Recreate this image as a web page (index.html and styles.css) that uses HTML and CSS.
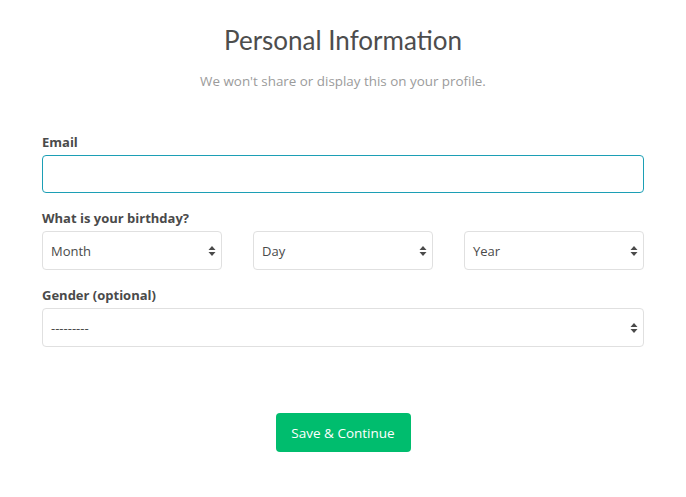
FILE: index.html
```html
<!DOCTYPE html>
<html>
<head>
<meta charset="utf-8">
<link rel="stylesheet" href="styles.css">
</head>
<body>
<div class="page">
  <header class="head">
    <h1 class="title">Personal Information</h1>
    <p class="subtitle">We won't share or display this on your profile.</p>
  </header>
  <form class="form">
    <div class="field">
      <label class="label">Email</label>
      <div class="input focused"></div>
    </div>
    <div class="field">
      <label class="label">What is your birthday?</label>
      <div class="row">
        <div class="select"><span>Month</span><svg class="arrows" width="8" height="12" viewBox="0 0 8 12"><path d="M4 1 L7.5 5 H0.5 Z M4 11 L0.5 7 H7.5 Z" fill="#4a4a4a"/></svg></div>
        <div class="select"><span>Day</span><svg class="arrows" width="8" height="12" viewBox="0 0 8 12"><path d="M4 1 L7.5 5 H0.5 Z M4 11 L0.5 7 H7.5 Z" fill="#4a4a4a"/></svg></div>
        <div class="select"><span>Year</span><svg class="arrows" width="8" height="12" viewBox="0 0 8 12"><path d="M4 1 L7.5 5 H0.5 Z M4 11 L0.5 7 H7.5 Z" fill="#4a4a4a"/></svg></div>
      </div>
    </div>
    <div class="field">
      <label class="label">Gender (optional)</label>
      <div class="select"><span>---------</span><svg class="arrows" width="8" height="12" viewBox="0 0 8 12"><path d="M4 1 L7.5 5 H0.5 Z M4 11 L0.5 7 H7.5 Z" fill="#4a4a4a"/></svg></div>
    </div>
    <div class="actions">
      <button type="button" class="btn">Save &amp; Continue</button>
    </div>
  </form>
</div>
</body>
</html>
```
FILE: styles.css
```css
* { box-sizing: border-box; }
html, body { margin: 0; padding: 0; background: #fff; }
body { font-family: "Open Sans", Lato, sans-serif; color: #4a4a4a; }
.page { padding: 0 42px 0 42px; width: 686px; }
.head { text-align: center; padding-top: 24px; }
.title { margin: 0; font-family: Lato, "Open Sans", sans-serif; font-size: 26px; font-weight: 400; line-height: 32px; color: #4d4d4d; }
.subtitle { margin: 17px 0 0; font-size: 13.4px; line-height: 16px; color: #9b9b9b; }
.form { margin-top: 45px; display: flex; flex-direction: column; gap: 17px; }
.field { display: flex; flex-direction: column; gap: 5px; }
.label { font-size: 13px; font-weight: 700; line-height: 16px; color: #4a4a4a; }
.input { height: 38px; border: 1px solid #dcdcdc; border-radius: 4px; }
.input.focused { border-color: #1c9fb5; }
.row { display: flex; gap: 31px; }
.row .select { flex: 1; }
.select { height: 39px; border: 1px solid #e0e0e0; border-radius: 4px; display: flex; align-items: center; justify-content: space-between; padding: 0 5px 0 8px; font-size: 13px; color: #4a4a4a; }
.arrows { display: block; }
.actions { display: flex; justify-content: center; margin-top: 49px; }
.btn { width: 135px; height: 39px; border: none; border-radius: 4px; background: #00bd6e; color: #fff; font-family: "Open Sans", Lato, sans-serif; font-size: 13.5px; font-weight: 400; padding: 0; }
```
